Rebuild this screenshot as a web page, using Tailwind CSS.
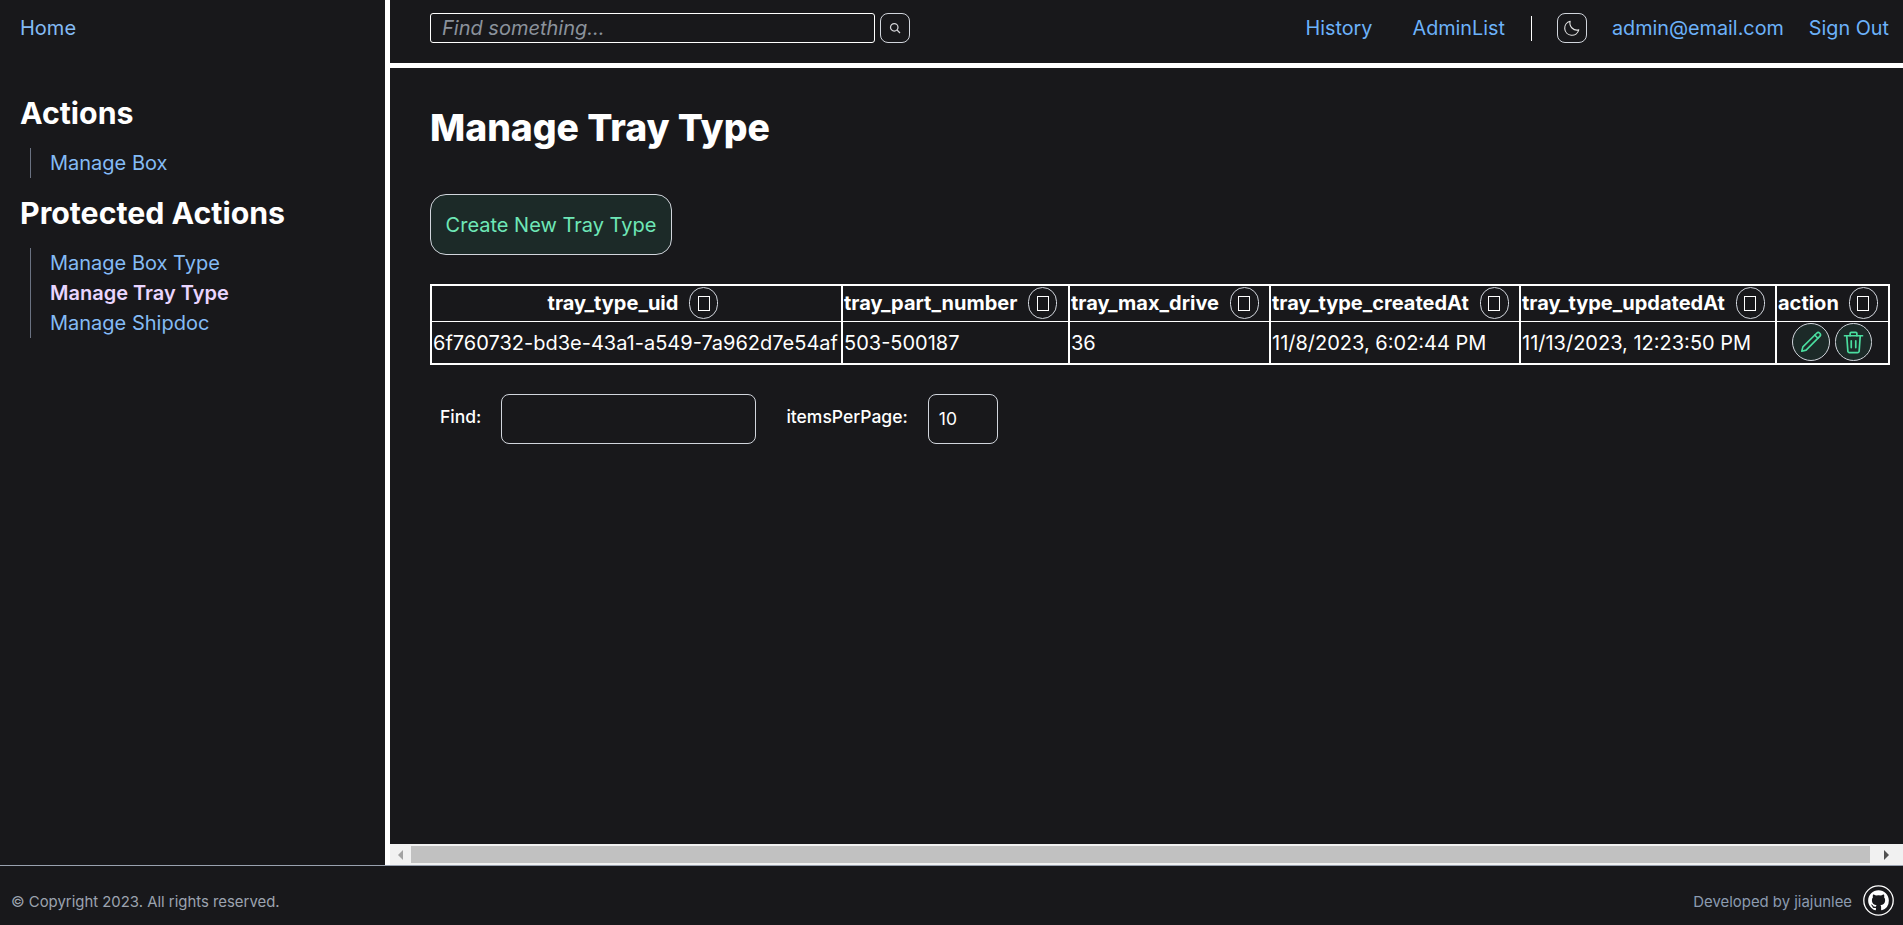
<!DOCTYPE html>
<html lang="en">
<head>
<meta charset="UTF-8">
<title>Manage Tray Type</title>
<script src="https://cdn.jsdelivr.net/npm/@tailwindcss/browser@4"></script>
</head>
<body class="bg-[#18181b] text-white font-['Inter',sans-serif] overflow-hidden">
<div class="flex flex-col h-[925px]">
    <div class="flex h-[865px]">
        <!-- sidebar -->
        <aside class="w-[385px] shrink-0 pl-5 pt-[14px]">
            <a href="#" class="block text-xl leading-7 text-[#84bbf5]">Home</a>
            <h2 class="mt-[53px] text-[30.3px] leading-9 font-bold">Actions</h2>
            <ul class="mt-[17px] ml-[10px] pl-[19px] border-l border-gray-500 text-xl text-[#84bbf5]">
                <li class="h-[30px] leading-[30px]">Manage Box</li>
            </ul>
            <h2 class="mt-[17px] text-[30.3px] leading-9 font-bold">Protected Actions</h2>
            <ul class="mt-[17px] ml-[10px] pl-[19px] border-l border-gray-500 text-xl text-[#84bbf5]">
                <li class="h-[30px] leading-[30px]">Manage Box Type</li>
                <li class="h-[30px] leading-[30px] font-semibold text-[#e9d5ff]">Manage Tray Type</li>
                <li class="h-[30px] leading-[30px]">Manage Shipdoc</li>
            </ul>
        </aside>

        <div class="flex-1 min-w-0 flex flex-col border-l-[5px] border-white">
            <!-- top bar -->
            <header class="h-[68px] shrink-0 border-b-[5px] border-white flex items-center pl-10 pr-[14px] pb-[7px] text-xl">
                <div class="w-[445px] h-[30px] border border-white rounded-[3px] pl-[11px] flex items-center italic text-[#8b929c]">Find something...</div>
                <button class="ml-[5px] w-[30px] h-[30px] border border-gray-300 rounded-lg flex items-center justify-center">
                    <svg class="w-[12px] h-[12px]" viewBox="0 0 24 24" fill="none" stroke="#d4d4d8" stroke-width="2.5"><circle cx="10.5" cy="10.5" r="7.5"/><path d="M16 16l6 6"/></svg>
                </button>
                <a href="#" class="ml-auto mt-[2px] text-[19.8px] text-[#6cb2fa]">History</a>
                <a href="#" class="ml-10 mt-[2px] text-[19.8px] text-[#6cb2fa]">AdminList</a>
                <div class="ml-[26px] w-px h-[25px] bg-white"></div>
                <button class="ml-[25px] w-[30px] h-[30px] border border-gray-300 rounded-lg flex items-center justify-center">
                    <svg class="w-[18px] h-[18px]" viewBox="0 0 24 24" fill="none" stroke="#e5e5e5" stroke-width="1.5" stroke-linecap="round" stroke-linejoin="round"><path d="M21 14.5A9.5 9.5 0 0 1 9.5 3 9.5 9.5 0 1 0 21 14.5z"/></svg>
                </button>
                <a href="#" class="ml-[25px] mt-[2px] text-[19.8px] text-[#6cb2fa]">admin@email.com</a>
                <a href="#" class="ml-[25px] mt-[2px] text-[19.8px] text-[#6cb2fa]">Sign Out</a>
            </header>

            <main class="flex-1 pl-10 min-h-0">
                <h1 class="mt-[40px] text-[37.3px] leading-10 font-extrabold">Manage Tray Type</h1>
                <button class="mt-[46px] h-[61px] w-[242px] rounded-2xl border border-gray-300 bg-[#1c2a28] text-xl text-[#6ee7b7]">Create New Tray Type</button>

                <table class="mt-[29px] w-[1460px] table-fixed border-collapse text-xl">
                    <thead>
                        <tr class="h-[36px] border-t-2 border-white">
                            <th class="w-[411px] border-x-2 border-y border-white p-0 pr-[7px] font-bold text-center"><span class="inline-flex items-center gap-[11px] align-middle">tray_type_uid <button class="w-[29px] h-[32px] rounded-full border border-gray-300 inline-flex items-center justify-center"><span class="w-[12px] h-[15px] border-[1.5px] border-white"></span></button></span></th>
                            <th class="w-[227px] border-x-2 border-y border-white p-0 pl-[1px] font-bold text-left"><span class="inline-flex items-center gap-[11px] align-middle">tray_part_number <button class="w-[29px] h-[32px] rounded-full border border-gray-300 inline-flex items-center justify-center"><span class="w-[12px] h-[15px] border-[1.5px] border-white"></span></button></span></th>
                            <th class="w-[201px] border-x-2 border-y border-white p-0 pl-[1px] font-bold text-left"><span class="inline-flex items-center gap-[11px] align-middle">tray_max_drive <button class="w-[29px] h-[32px] rounded-full border border-gray-300 inline-flex items-center justify-center"><span class="w-[12px] h-[15px] border-[1.5px] border-white"></span></button></span></th>
                            <th class="w-[250px] border-x-2 border-y border-white p-0 pl-[1px] font-bold text-left"><span class="inline-flex items-center gap-[11px] align-middle">tray_type_createdAt <button class="w-[29px] h-[32px] rounded-full border border-gray-300 inline-flex items-center justify-center"><span class="w-[12px] h-[15px] border-[1.5px] border-white"></span></button></span></th>
                            <th class="w-[256px] border-x-2 border-y border-white p-0 pl-[1px] font-bold text-left"><span class="inline-flex items-center gap-[11px] align-middle">tray_type_updatedAt <button class="w-[29px] h-[32px] rounded-full border border-gray-300 inline-flex items-center justify-center"><span class="w-[12px] h-[15px] border-[1.5px] border-white"></span></button></span></th>
                            <th class="border-x-2 border-y border-white p-0 pl-[1px] font-bold text-left"><span class="inline-flex items-center gap-[10px] align-middle">action <button class="w-[29px] h-[32px] rounded-full border border-gray-300 inline-flex items-center justify-center"><span class="w-[12px] h-[15px] border-[1.5px] border-white"></span></button></span></th>
                        </tr>
                    </thead>
                    <tbody>
                        <tr class="h-[43px] border-b-2 border-white">
                            <td class="border-x-2 border-y border-white p-0 pl-[1px] pt-[2px] whitespace-nowrap">6f760732-bd3e-43a1-a549-7a962d7e54af</td>
                            <td class="border-x-2 border-y border-white p-0 pl-[1px] pt-[2px]">503-500187</td>
                            <td class="border-x-2 border-y border-white p-0 pl-[1px] pt-[2px]">36</td>
                            <td class="border-x-2 border-y border-white p-0 pl-[1px] pt-[2px]">11/8/2023, 6:02:44 PM</td>
                            <td class="border-x-2 border-y border-white p-0 pl-[1px] pt-[2px]">11/13/2023, 12:23:50 PM</td>
                            <td class="border-x-2 border-y border-white p-0">
                                <div class="flex justify-center gap-[5px] pr-[2px]">
                                    <button class="w-[38px] h-[38px] rounded-[19px] border border-gray-300 bg-[#1c2a28] flex items-center justify-center">
                                        <svg class="w-[26px] h-[26px]" viewBox="0 0 24 24" fill="none" stroke="#4ade9f" stroke-width="1.5" stroke-linecap="round" stroke-linejoin="round"><path d="M17.2 3.9a2 2 0 0 1 2.9 2.9L7.5 19.5 3.5 20.5l1-4z"/><path d="M15.5 5.6l2.9 2.9"/></svg>
                                    </button>
                                    <button class="w-[37px] h-[38px] rounded-[19px] border border-gray-300 bg-[#1c2a28] flex items-center justify-center">
                                        <svg class="w-[27px] h-[27px]" viewBox="0 0 24 24" fill="none" stroke="#4ade9f" stroke-width="1.5" stroke-linecap="round" stroke-linejoin="round"><path d="M4 6h16"/><path d="M9 6V4a1 1 0 0 1 1-1h4a1 1 0 0 1 1 1v2"/><path d="M6 6l1 14a1.5 1.5 0 0 0 1.5 1h7a1.5 1.5 0 0 0 1.5-1l1-14"/><path d="M10 10.5v6"/><path d="M14 10.5v6"/></svg>
                                    </button>
                                </div>
                            </td>
                        </tr>
                    </tbody>
                </table>

                <div class="mt-[29px] flex items-center text-[17.5px] font-medium">
                    <label class="ml-[10px] -mt-[3px]">Find:</label>
                    <input type="text" class="ml-5 w-[255px] h-[50px] border border-gray-300 rounded-lg bg-transparent">
                    <label class="ml-[30px] -mt-[3px]">itemsPerPage:</label>
                    <div class="ml-5 w-[70px] h-[50px] border border-gray-300 rounded-lg flex items-center pl-[10px] font-normal">10</div>
                </div>
            </main>

            <!-- horizontal scrollbar -->
            <div class="h-[21px] shrink-0 bg-[#f1f1f1] flex items-center">
                <div class="w-[21px] flex justify-center"><span class="border-y-[5px] border-r-[5px] border-y-transparent border-r-[#a3a3a3]"></span></div>
                <div class="w-[1459px] h-[17px] bg-[#c1c1c1]"></div>
                <div class="flex-1 flex justify-center"><span class="border-y-[5px] border-l-[5px] border-y-transparent border-l-[#505050]"></span></div>
            </div>
        </div>
    </div>

    <footer class="flex-1 border-t border-gray-400 flex items-center justify-between pl-[11px] pr-[9px] pt-[10px] text-[14.9px]">
        <span class="pt-[3px] text-[#9ca3af]">© Copyright 2023. All rights reserved.</span>
        <div class="flex items-center gap-[11px]">
            <span class="pt-[3px] text-[#8b9bb0]">Developed by jiajunlee</span>
            <svg class="w-[31px] h-[31px]" viewBox="0 0 31 31">
                <circle cx="15.5" cy="15.5" r="14.7" fill="none" stroke="#fff" stroke-width="1.3"/>
                <g transform="translate(4.7 4.7) scale(0.9)"><path fill="#fff" d="M12 .5C5.65.5.5 5.65.5 12c0 5.08 3.29 9.39 7.86 10.91.57.1.79-.25.79-.55v-2.14c-3.2.7-3.87-1.36-3.87-1.36-.52-1.33-1.28-1.68-1.28-1.68-1.04-.71.08-.7.08-.7 1.16.08 1.77 1.19 1.77 1.19 1.03 1.76 2.69 1.25 3.35.96.1-.75.4-1.25.73-1.54-2.55-.29-5.24-1.28-5.24-5.69 0-1.26.45-2.28 1.19-3.09-.12-.29-.52-1.46.11-3.05 0 0 .97-.31 3.16 1.18a11 11 0 0 1 5.76 0c2.19-1.49 3.16-1.18 3.16-1.18.63 1.59.23 2.76.11 3.05.74.81 1.19 1.83 1.19 3.09 0 4.42-2.69 5.39-5.25 5.68.41.36.78 1.06.78 2.14v3.17c0 .31.21.66.8.55A11.5 11.5 0 0 0 23.5 12C23.5 5.65 18.35.5 12 .5z"/></g>
            </svg>
        </div>
    </footer>
</div>
</body>
</html>
